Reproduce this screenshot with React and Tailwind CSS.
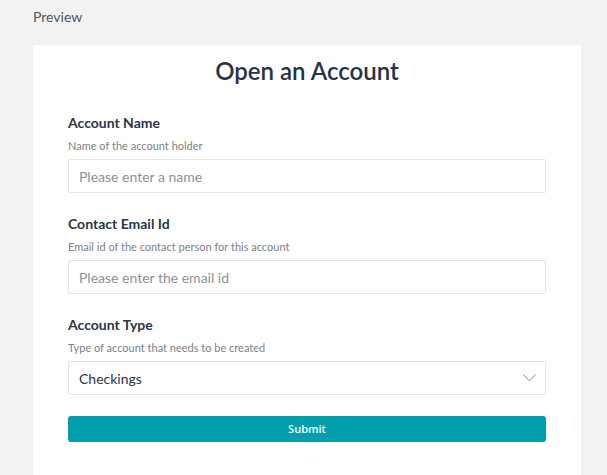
import React, { useState } from "react";

const fields = [
  {
    id: "name",
    label: "Account Name",
    hint: "Name of the account holder",
    placeholder: "Please enter a name",
  },
  {
    id: "email",
    label: "Contact Email Id",
    hint: "Email id of the contact person for this account",
    placeholder: "Please enter the email id",
  },
];

const Field = ({ label, hint, children }) => (
  <div className="flex flex-col">
    <label className="text-[14px] leading-5 font-bold text-[#2a3548]">{label}</label>
    <p className="mt-[5px] text-[11px] leading-4 text-[#7b818c]">{hint}</p>
    <div className="mt-[5px]">{children}</div>
  </div>
);

const App = () => {
  const [values, setValues] = useState({ name: "", email: "", type: "Checkings" });

  return (
    <div className="min-h-screen bg-[#f2f2f2] pl-[33px] pr-[26px] pt-[9px] font-['Lato',sans-serif]">
      <div className="text-[14px] leading-4 text-[#4b5563]">Preview</div>

      <div className="mt-[20px] bg-white px-[35px] pt-[11px] pb-[34px]">
        <h1 className="text-center text-[24px] leading-[30px] font-semibold text-[#263248]">
          Open an Account
        </h1>

        <form className="mt-[27px] flex flex-col gap-[21px]" onSubmit={(e) => e.preventDefault()}>
          {fields.map((f) => (
            <Field key={f.id} label={f.label} hint={f.hint}>
              <input
                type={f.id === "email" ? "email" : "text"}
                value={values[f.id]}
                onChange={(e) => setValues({ ...values, [f.id]: e.target.value })}
                placeholder={f.placeholder}
                className="h-[34px] w-full rounded-[2px] border border-[#e3e4e8] px-[10px] text-[14px] text-[#2a3548] placeholder:text-[#8b919c] focus:outline-none"
              />
            </Field>
          ))}

          <Field label="Account Type" hint="Type of account that needs to be created">
            <div className="relative">
              <select
                value={values.type}
                onChange={(e) => setValues({ ...values, type: e.target.value })}
                className="h-[34px] w-full appearance-none rounded-[2px] border border-[#e3e4e8] bg-white px-[10px] text-[14px] text-[#2a3548] focus:outline-none"
              >
                <option>Checkings</option>
                <option>Savings</option>
              </select>
              <svg
                className="pointer-events-none absolute right-[10px] top-[13px]"
                width="13"
                height="8"
                viewBox="0 0 13 8"
                fill="none"
              >
                <path d="M0.5 0.5L6.5 7L12.5 0.5" stroke="#8b919c" strokeWidth="1" />
              </svg>
            </div>
          </Field>

          <button
            type="submit"
            className="h-[26px] w-full rounded-[3px] bg-[#009fab] font-['Open_Sans',sans-serif] text-[11px] font-semibold text-white"
          >
            Submit
          </button>
        </form>
      </div>
    </div>
  );
};

export default App;
